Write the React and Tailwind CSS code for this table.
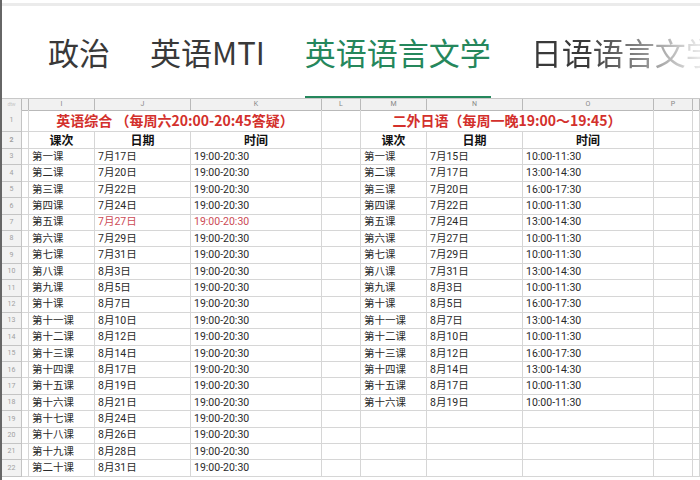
const cols = "grid grid-cols-[20px_7px_66px_96px_131px_39px_66px_96px_131px_39px_1fr]";

const left = [
  ["第一课", "7月17日"], ["第二课", "7月20日"], ["第三课", "7月22日"], ["第四课", "7月24日"],
  ["第五课", "7月27日"], ["第六课", "7月29日"], ["第七课", "7月31日"], ["第八课", "8月3日"],
  ["第九课", "8月5日"], ["第十课", "8月7日"], ["第十一课", "8月10日"], ["第十二课", "8月12日"],
  ["第十三课", "8月14日"], ["第十四课", "8月17日"], ["第十五课", "8月19日"], ["第十六课", "8月21日"],
  ["第十七课", "8月24日"], ["第十八课", "8月26日"], ["第十九课", "8月28日"], ["第二十课", "8月31日"],
];

const right = [
  ["第一课", "7月15日", "10:00-11:30"], ["第二课", "7月17日", "13:00-14:30"],
  ["第三课", "7月20日", "16:00-17:30"], ["第四课", "7月22日", "10:00-11:30"],
  ["第五课", "7月24日", "13:00-14:30"], ["第六课", "7月27日", "10:00-11:30"],
  ["第七课", "7月29日", "10:00-11:30"], ["第八课", "7月31日", "13:00-14:30"],
  ["第九课", "8月3日", "10:00-11:30"], ["第十课", "8月5日", "16:00-17:30"],
  ["第十一课", "8月7日", "13:00-14:30"], ["第十二课", "8月10日", "10:00-11:30"],
  ["第十三课", "8月12日", "16:00-17:30"], ["第十四课", "8月14日", "13:00-14:30"],
  ["第十五课", "8月17日", "10:00-11:30"], ["第十六课", "8月19日", "10:00-11:30"],
];

const Cell = ({ children, className = "" }) => (
  <div className={`flex items-center overflow-hidden whitespace-nowrap border-r border-b border-[#d6d6d6] ${className}`}>
    {children}
  </div>
);

const RowNum = ({ n }) => (
  <div className="flex items-center justify-center border-r border-b border-[#c4c4c4] bg-[#f2f2f2] font-['Roboto',sans-serif] text-[7px] text-[#a0a0a0]">
    {n}
  </div>
);

const App = () => {
  return (
    <div className="w-[700px] h-[480px] overflow-hidden bg-white border-l-2 border-[#666] font-['Noto_Sans_CJK_SC',sans-serif]">
      <div className="h-[3px]" />
      <div className="h-[3px] bg-[#ebebeb]" />
      <div className="flex h-[92px] items-end gap-[40px] pl-[46px] text-[31px] leading-[31px] text-[#393939] whitespace-nowrap">
        <div className="pb-[29px] border-b-2 border-transparent">政治</div>
        <div className="pb-[29px] border-b-2 border-transparent">英语MTI</div>
        <div className="pb-[29px] border-b-2 border-[#25875c] text-[#25875c]">英语语言文学</div>
        <div className="pb-[29px] border-b-2 border-transparent bg-gradient-to-r from-[#393939] from-30% to-[#e8e8e8] to-90% bg-clip-text text-transparent">
          日语语言文学
        </div>
      </div>

      <div className={`${cols} h-[12px] border-t border-[#c8c8c8] bg-[#f1f1f1] font-['Roboto',sans-serif] text-[7px] text-[#888]`}>
        {["", "", "I", "J", "K", "L", "M", "N", "O", "P", ""].map((c, i) => (
          <div key={i} className="flex items-center justify-center border-r border-b border-[#b9b9b9]">
            {i === 0 ? <span className="text-[5px] text-[#c4c4c4]">dtw</span> : c}
          </div>
        ))}
      </div>

      <div className={`${cols} h-[22px]`}>
        <RowNum n={1} />
        <Cell />
        <Cell className="col-span-3 justify-center text-[14px] font-bold text-[#d3302c]">
          英语综合 （每周六20:00-20:45答疑）
        </Cell>
        <Cell />
        <Cell className="col-span-3 justify-center text-[14px] font-bold text-[#d3302c]">
          二外日语（每周一晚19:00～19:45）
        </Cell>
        <Cell />
        <Cell />
      </div>

      <div className={`${cols} h-[17px] text-[12px] font-bold text-[#111]`}>
        <RowNum n={2} />
        <Cell />
        <Cell className="justify-center">课次</Cell>
        <Cell className="justify-center">日期</Cell>
        <Cell className="justify-center">时间</Cell>
        <Cell />
        <Cell className="justify-center">课次</Cell>
        <Cell className="justify-center">日期</Cell>
        <Cell className="justify-center">时间</Cell>
        <Cell />
        <Cell />
      </div>

      {left.map((row, i) => {
        const r = right[i];
        const red = i === 4 ? "text-[#cc4a55]" : "";
        return (
          <div key={i} className={`${cols} h-[16.4px] font-['Roboto','Noto_Sans_CJK_SC',sans-serif] text-[10.5px] text-[#2a2a2a]`}>
            <RowNum n={i + 3} />
            <Cell />
            <Cell className="pl-[3px]">{row[0]}</Cell>
            <Cell className={`pl-[3px] ${red}`}>{row[1]}</Cell>
            <Cell className={`pl-[3px] ${red}`}>19:00-20:30</Cell>
            <Cell />
            <Cell className="pl-[3px]">{r ? r[0] : ""}</Cell>
            <Cell className="pl-[3px]">{r ? r[1] : ""}</Cell>
            <Cell className="pl-[3px]">{r ? r[2] : ""}</Cell>
            <Cell />
            <Cell />
          </div>
        );
      })}
    </div>
  );
};

export default App;
